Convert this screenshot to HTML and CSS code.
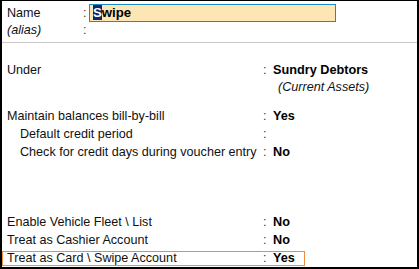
FILE: index.html
```html
<!DOCTYPE html>
<html lang="en">
<head>
  <meta charset="UTF-8" />
  <title>Ledger Creation</title>
  <link rel="stylesheet" href="styles.css">
</head>
<body>
  <div class="screen">
    <div class="head">
      <div class="head-row">
        <span class="label">Name</span>
        <span class="colon">:</span>
        <div class="name-input"><span class="caret">S</span>wipe</div>
      </div>
      <div class="head-row">
        <span class="label italic">(alias)</span>
        <span class="colon">:</span>
        <span></span>
      </div>
    </div>

    <div class="row under-row">
      <span class="label">Under</span>
      <span class="colon">:</span>
      <span class="value">Sundry Debtors</span>
    </div>
    <div class="row sub-row">
      <span></span>
      <span></span>
      <span class="note">(Current Assets)</span>
    </div>

    <div class="row bill-row">
      <span class="label">Maintain balances bill-by-bill</span>
      <span class="colon">:</span>
      <span class="value">Yes</span>
    </div>
    <div class="row">
      <span class="label indent">Default credit period</span>
      <span class="colon">:</span>
      <span class="value"></span>
    </div>
    <div class="row">
      <span class="label indent">Check for credit days during voucher entry</span>
      <span class="colon">:</span>
      <span class="value">No</span>
    </div>

    <div class="row fleet-row">
      <span class="label">Enable Vehicle Fleet \ List</span>
      <span class="colon">:</span>
      <span class="value">No</span>
    </div>
    <div class="row">
      <span class="label">Treat as Cashier Account</span>
      <span class="colon">:</span>
      <span class="value">No</span>
    </div>
    <div class="row active">
      <span class="label">Treat as Card \ Swipe Account</span>
      <span class="colon">:</span>
      <span class="value">Yes</span>
    </div>
  </div>
</body>
</html>
```

FILE: styles.css
```css
body {
  margin: 0;
  padding: 0;
  background: white;
  font-family: "Liberation Sans", Arial, sans-serif;
  font-size: 12.6px;
  color: #111;
}
.screen {
  width: 419px;
  height: 269px;
  box-sizing: border-box;
  border: 2px solid #000;
  border-top-width: 1px;
  overflow: hidden;
}
.head {
  padding: 3px 0 3px 0;
  border-bottom: 1px solid #c8c8c8;
}
.head-row {
  display: grid;
  grid-template-columns: 75px 7px auto;
  padding-left: 5px;
  height: 18px;
  line-height: 18px;
}
.head-row + .head-row {
  height: 17px;
  line-height: 17px;
}
.name-input {
  width: 247px;
  height: 18px;
  box-sizing: border-box;
  border: 1px solid #1c8cc6;
  background: #fde6b3;
  font-weight: bold;
  font-size: 13.2px;
  line-height: 16px;
  padding-left: 3px;
  color: #000;
}
.caret {
  background: #0b2a6b;
  color: white;
}
.italic {
  font-style: italic;
}
.row {
  display: grid;
  grid-template-columns: 255px 11px auto;
  padding-left: 5px;
  height: 18px;
  line-height: 18px;
  white-space: nowrap;
}
.colon {
  color: #333;
  padding-left: 1px;
}
.value {
  font-weight: bold;
  font-size: 12.7px;
  color: #000;
}
.indent {
  padding-left: 13px;
}
.note {
  font-style: italic;
  padding-left: 5px;
}
.under-row {
  margin-top: 18px;
}
.sub-row {
  height: 16px;
  line-height: 16px;
}
.bill-row {
  margin-top: 12px;
}
.fleet-row {
  margin-top: 52px;
}
.active {
  margin-top: 2px;
  width: 303px;
  height: 15px;
  line-height: 13px;
  box-sizing: border-box;
  border: 1px solid #ef8a3e;
  padding-left: 4px;
}
```
